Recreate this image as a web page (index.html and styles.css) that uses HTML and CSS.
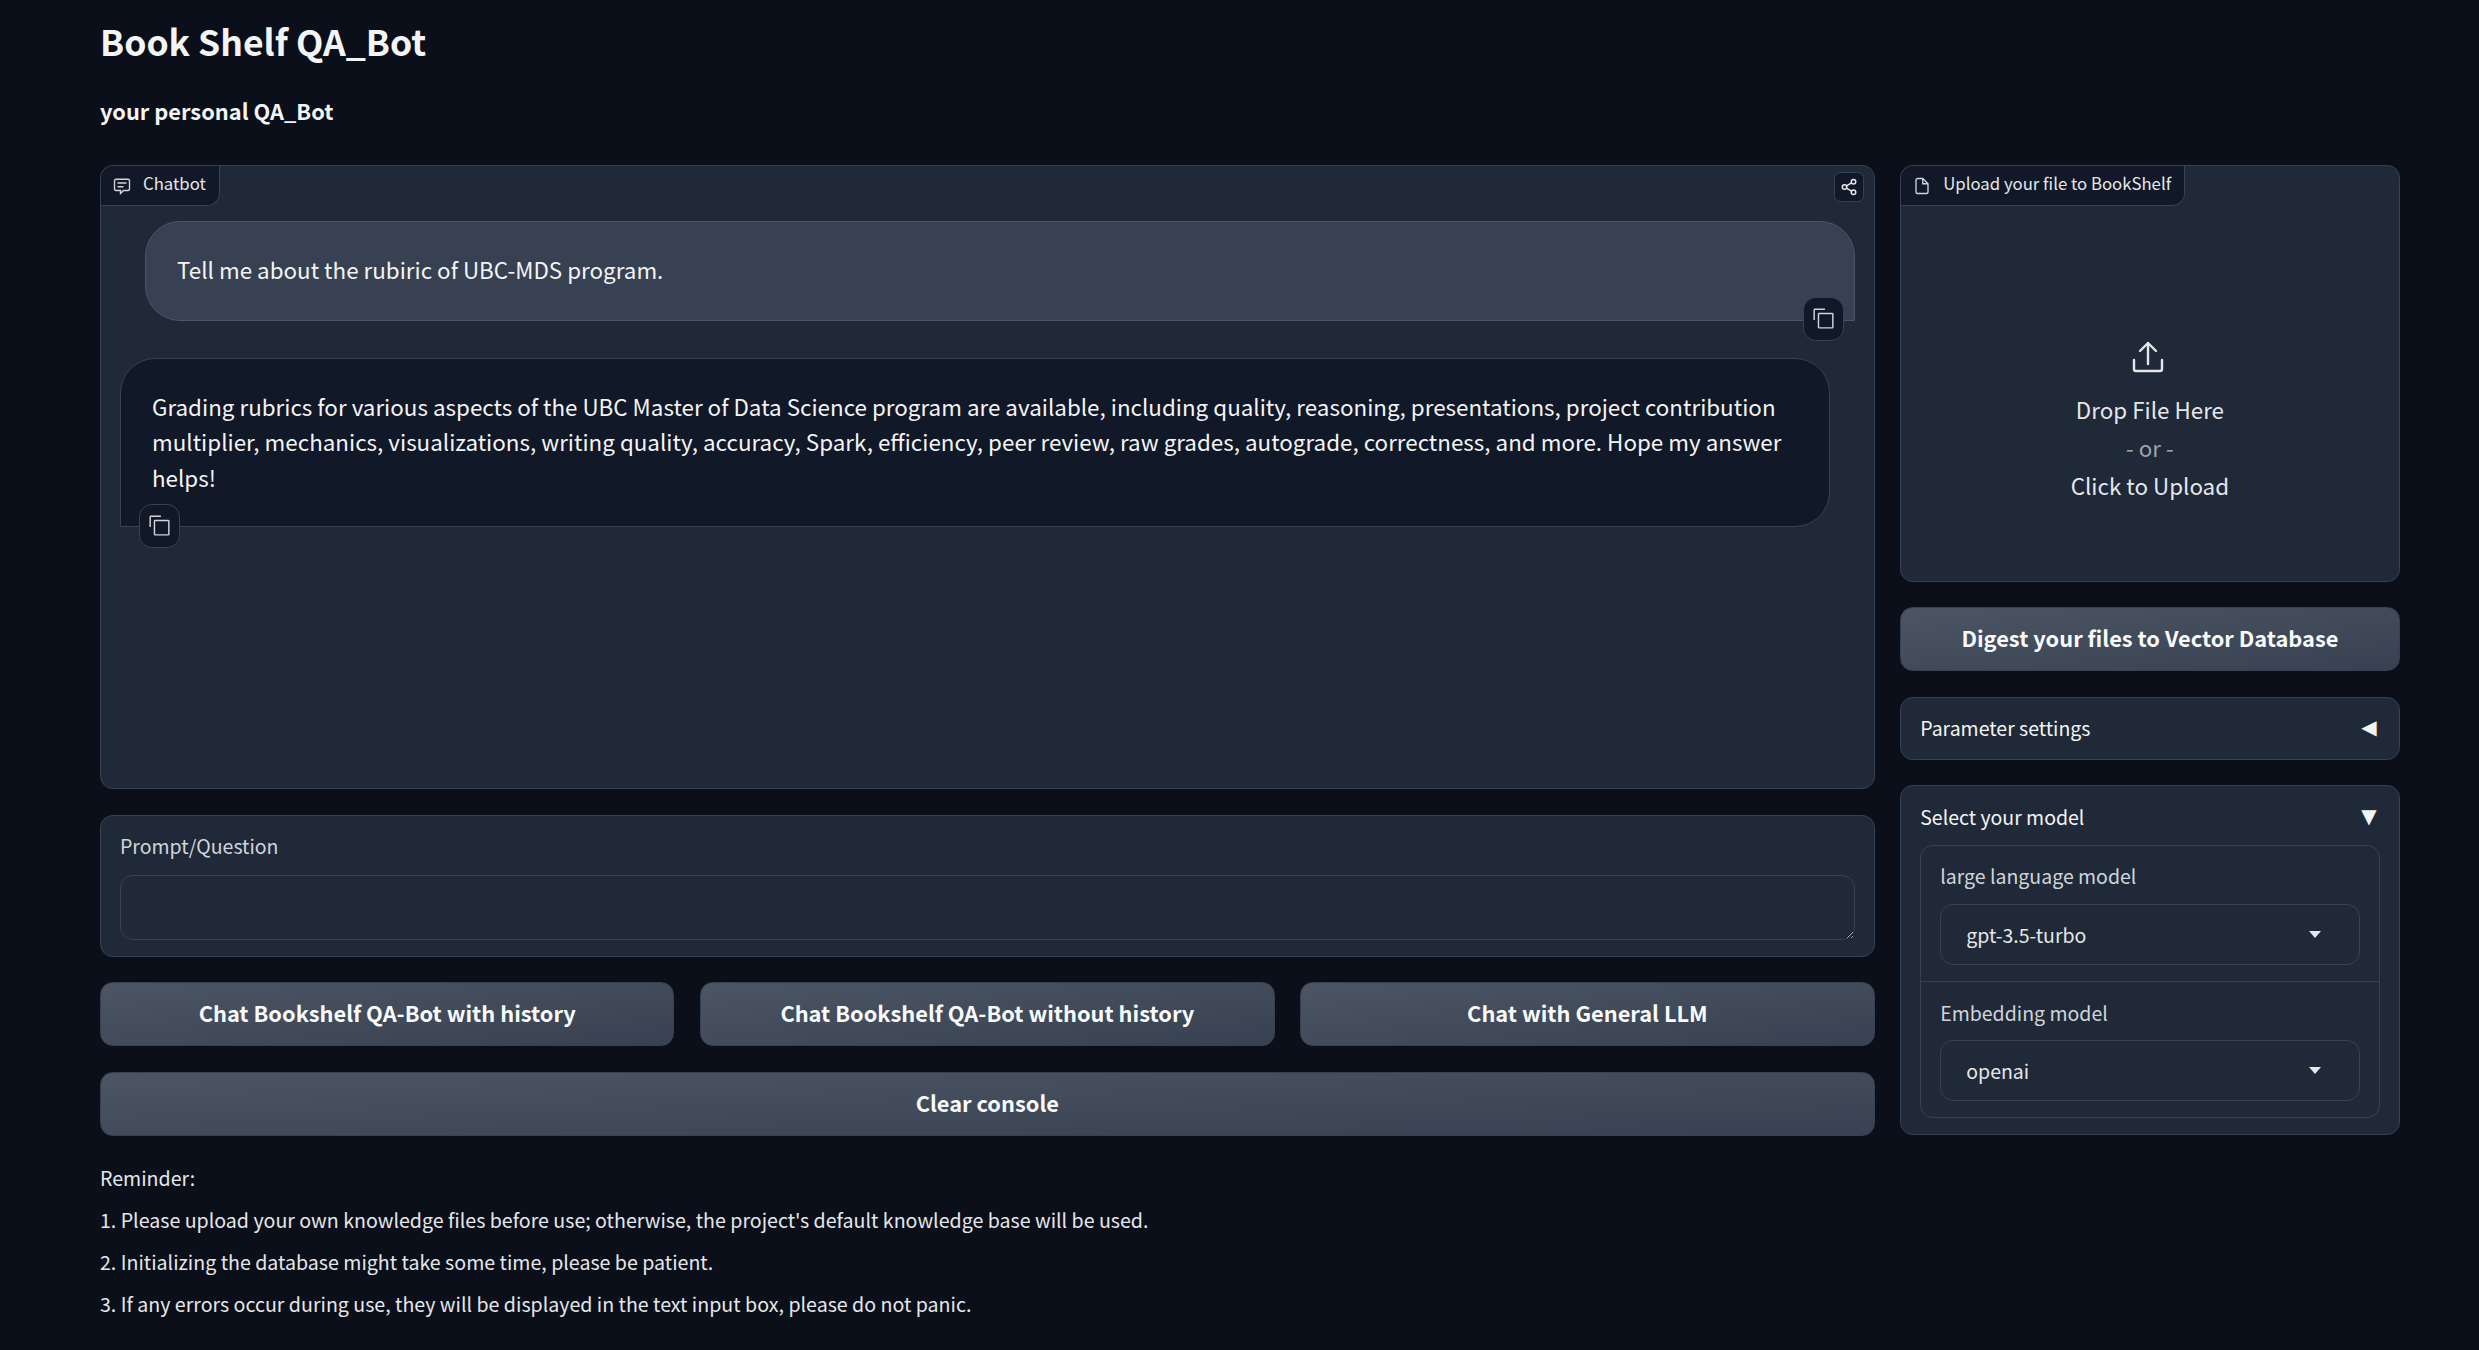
FILE: index.html
```html
<!DOCTYPE html>
<html lang="en">
<head>
<meta charset="utf-8">
<title>Book Shelf QA_Bot</title>
<link rel="stylesheet" href="styles.css">
</head>
<body>
<main class="page">
  <h1 class="title">Book Shelf QA_Bot</h1>
  <p class="subtitle">your personal QA_Bot</p>
  <div class="columns">
    <section class="left">
      <div class="panel chat">
        <div class="tag">
          <svg class="tag-icon" viewBox="0 0 24 24" fill="none" stroke="currentColor" stroke-width="1.8"><path d="M4 3h16a2 2 0 0 1 2 2v11a2 2 0 0 1-2 2h-6l-4 4v-4H4a2 2 0 0 1-2-2V5a2 2 0 0 1 2-2z"/><path d="M6 8h12M6 13h8"/></svg>
          <span>Chatbot</span>
        </div>
        <button class="share" type="button" aria-label="Share">
          <svg viewBox="0 0 24 24" fill="none" stroke="currentColor" stroke-width="2"><circle cx="18" cy="5" r="3"/><circle cx="6" cy="12" r="3"/><circle cx="18" cy="19" r="3"/><path d="M8.6 13.5l6.8 4M15.4 6.5l-6.8 4"/></svg>
        </button>
        <div class="msg msg-user">
          <p>Tell me about the rubiric of UBC-MDS program.</p>
          <button class="copy copy-user" type="button" aria-label="Copy">
            <svg viewBox="0 0 32 32" fill="currentColor"><path d="M28 10v18H10V10h18m0-2H10a2 2 0 0 0-2 2v18a2 2 0 0 0 2 2h18a2 2 0 0 0 2-2V10a2 2 0 0 0-2-2Z"/><path d="M4 18H2V4a2 2 0 0 1 2-2h14v2H4Z"/></svg>
          </button>
        </div>
        <div class="msg msg-bot">
          <p>Grading rubrics for various aspects of the UBC Master of Data Science program are available, including quality, reasoning, presentations, project contribution multiplier, mechanics, visualizations, writing quality, accuracy, Spark, efficiency, peer review, raw grades, autograde, correctness, and more. Hope my answer helps!</p>
          <button class="copy copy-bot" type="button" aria-label="Copy">
            <svg viewBox="0 0 32 32" fill="currentColor"><path d="M28 10v18H10V10h18m0-2H10a2 2 0 0 0-2 2v18a2 2 0 0 0 2 2h18a2 2 0 0 0 2-2V10a2 2 0 0 0-2-2Z"/><path d="M4 18H2V4a2 2 0 0 1 2-2h14v2H4Z"/></svg>
          </button>
        </div>
      </div>
      <label class="panel prompt">
        <span class="field-label">Prompt/Question</span>
        <textarea class="prompt-input"></textarea>
      </label>
      <div class="btn-row">
        <button class="btn" type="button">Chat Bookshelf QA-Bot with history</button>
        <button class="btn" type="button">Chat Bookshelf QA-Bot without history</button>
        <button class="btn" type="button">Chat with General LLM</button>
      </div>
      <button class="btn" type="button">Clear console</button>
    </section>
    <aside class="right">
      <div class="panel upload">
        <div class="tag">
          <svg class="tag-icon" viewBox="0 0 24 24" fill="none" stroke="currentColor" stroke-width="1.8"><path d="M13 2H6a2 2 0 0 0-2 2v16a2 2 0 0 0 2 2h12a2 2 0 0 0 2-2V9z"/><path d="M13 2v7h7"/></svg>
          <span>Upload your file to BookShelf</span>
        </div>
        <div class="drop">
          <svg class="drop-icon" viewBox="0 0 32 32" fill="none" stroke="currentColor" stroke-width="2.4" stroke-linecap="round" stroke-linejoin="round"><path d="M16 23V2M8 10l8-8 8 8"/><path d="M2 19v9a2 2 0 0 0 2 2h24a2 2 0 0 0 2-2v-9"/></svg>
          <span class="drop-main">Drop File Here</span>
          <span class="drop-or">- or -</span>
          <span class="drop-main">Click to Upload</span>
        </div>
      </div>
      <button class="btn" type="button">Digest your files to Vector Database</button>
      <div class="panel accordion closed">
        <div class="acc-head"><span>Parameter settings</span><span class="acc-arrow">◀</span></div>
      </div>
      <div class="panel accordion">
        <div class="acc-head"><span>Select your model</span><span class="acc-arrow">▼</span></div>
        <div class="fields">
          <div class="field">
            <span class="field-label">large language model</span>
            <div class="select"><span>gpt-3.5-turbo</span><svg class="caret" viewBox="0 0 12 7" fill="currentColor"><path d="M0 0h12L6 7z"/></svg></div>
          </div>
          <div class="field">
            <span class="field-label">Embedding model</span>
            <div class="select"><span>openai</span><svg class="caret" viewBox="0 0 12 7" fill="currentColor"><path d="M0 0h12L6 7z"/></svg></div>
          </div>
        </div>
      </div>
    </aside>
  </div>
  <div class="notes">
    <p>Reminder:</p>
    <p>1. Please upload your own knowledge files before use; otherwise, the project's default knowledge base will be used.</p>
    <p>2. Initializing the database might take some time, please be patient.</p>
    <p>3. If any errors occur during use, they will be displayed in the text input box, please do not panic.</p>
  </div>
</main>
</body>
</html>
```
FILE: styles.css
```css
* { box-sizing: border-box; }
html, body { margin: 0; height: 100%; }
body {
  background: #0b0f19;
  color: #f3f4f6;
  font-family: "Noto Sans CJK SC", "Noto Sans", sans-serif;
  font-size: 19.5px;
  overflow: hidden;
}
p { margin: 0; }
button { font-family: inherit; color: inherit; }
.page { padding: 0 79.4px 0 100px; }
.title {
  margin: 0;
  padding-top: 18px;
  font-size: 35.5px;
  line-height: 46px;
  font-weight: 600;
}
.subtitle {
  margin-top: 28.5px;
  height: 36px;
  line-height: 36px;
  font-size: 21.8px;
  font-weight: 600;
}
.columns { display: flex; gap: 25.6px; margin-top: 36.5px; align-items: flex-start; }
.left { flex: 1; display: flex; flex-direction: column; gap: 25.6px; min-width: 0; }
.right { width: 499.4px; display: flex; flex-direction: column; gap: 25.6px; }
.panel {
  position: relative;
  background: #1f2937;
  border: 1.6px solid #374151;
  border-radius: 12.8px;
}
.tag {
  display: inline-flex;
  align-items: center;
  gap: 12px;
  height: 40px;
  padding: 0 13px 0 12px;
  background: #111827;
  border-right: 1.6px solid #374151;
  border-bottom: 1.6px solid #374151;
  border-radius: 12.8px 0 12.8px 0;
  font-size: 16.75px;
  color: #e5e7eb;
  position: absolute;
  left: 0;
  top: 0;
}
.tag span { margin-bottom: 5px; }
.tag-icon { width: 18px; height: 18px; margin-top: 1px; color: #d1d5db; }
.chat { height: 624px; padding: 55px 19px 0 19px; display: flex; flex-direction: column; gap: 37px; }
.msg { position: relative; font-size: 22.4px; line-height: 35.3px; border: 1.6px solid #374151; }
.msg-user {
  margin-left: 25px;
  height: 100px;
  padding: 30px 31px;
  background: #374151;
  border-color: #4b5563;
  border-radius: 35px 35px 0 35px;
}
.msg-bot {
  margin-right: 25px;
  height: 169px;
  padding: 30px 31px 0 31px;
  background: #111827;
  border-radius: 35px 35px 35px 0;
}
.copy {
  position: absolute;
  display: flex;
  align-items: center;
  justify-content: center;
  width: 41px;
  height: 43.6px;
  padding: 0;
  background: #111827;
  border: 1.6px solid #374151;
  border-radius: 12.8px;
  color: #d1d5db;
}
.copy svg { width: 23px; height: 23px; }
.copy-user { right: 10px; bottom: -20.6px; }
.copy-bot { left: 17.5px; bottom: -21.6px; }
.share {
  position: absolute;
  right: 9.5px;
  top: 6px;
  display: flex;
  align-items: center;
  justify-content: center;
  width: 30px;
  height: 30px;
  padding: 0;
  background: #111827;
  border: 1.6px solid #374151;
  border-radius: 6.4px;
  color: #e5e7eb;
}
.share svg { width: 18px; height: 18px; }
.prompt { display: block; height: 142px; padding: 13px 19px 0 19px; }
.field-label { display: block; font-size: 19.5px; line-height: 33px; color: #d1d5db; }
.prompt-input {
  display: block;
  width: 100%;
  height: 65px;
  margin-top: 13px;
  background: #1f2937;
  border: 1.6px solid #374151;
  border-radius: 12.8px;
  color: #f3f4f6;
  font-family: inherit;
  font-size: 19.5px;
  outline: none;
}
.btn-row { display: grid; grid-template-columns: repeat(3, 1fr); gap: 25.6px; }
.btn {
  display: block;
  width: 100%;
  height: 64px;
  padding: 0 0 3px;
  background: linear-gradient(to bottom right, #4b5563, #374151);
  border: 1.6px solid #374151;
  border-radius: 12.8px;
  color: #f9fafb;
  font-size: 21.8px;
  font-weight: 600;
}
.upload { height: 416.5px; }
.drop {
  height: 100%;
  padding-top: 98px;
  display: flex;
  flex-direction: column;
  align-items: center;
  justify-content: center;
  line-height: 38px;
  font-size: 22.4px;
}
.drop-icon { width: 32px; height: 32px; margin-bottom: 17.3px; margin-left: -3px; color: #e5e7eb; }
.drop-main { color: #e5e7eb; }
.drop-or { color: #9ca3af; }
.accordion { padding: 0 19px; }
.closed { height: 63.2px; }
.acc-head {
  display: flex;
  justify-content: space-between;
  align-items: center;
  height: 59.4px;
  padding-right: 3px;
  font-size: 19.5px;
  color: #f3f4f6;
}
.acc-arrow { font-family: "DejaVu Sans", sans-serif; font-size: 20px; }
.fields {
  border: 1.6px solid #374151;
  border-radius: 12.8px;
  margin-bottom: 16px;
  margin-top: -1px;
}
.field { padding: 13px 19px 0 19px; height: 135px; }
.field + .field { border-top: 1.6px solid #374151; height: 136.4px; padding-top: 14.4px; }
.select {
  display: flex;
  align-items: center;
  justify-content: space-between;
  height: 61px;
  margin-top: 12px;
  padding: 0 38px 0 25px;
  border: 1.6px solid #374151;
  border-radius: 12.8px;
  color: #e5e7eb;
}
.field + .field .select { margin-top: 11px; }
.caret { width: 12px; height: 7px; color: #e5e7eb; }
.notes { margin-top: 25.4px; font-size: 19.6px; line-height: 33.6px; color: #e5e7eb; }
.notes p + p { margin-top: 8.5px; }
```
